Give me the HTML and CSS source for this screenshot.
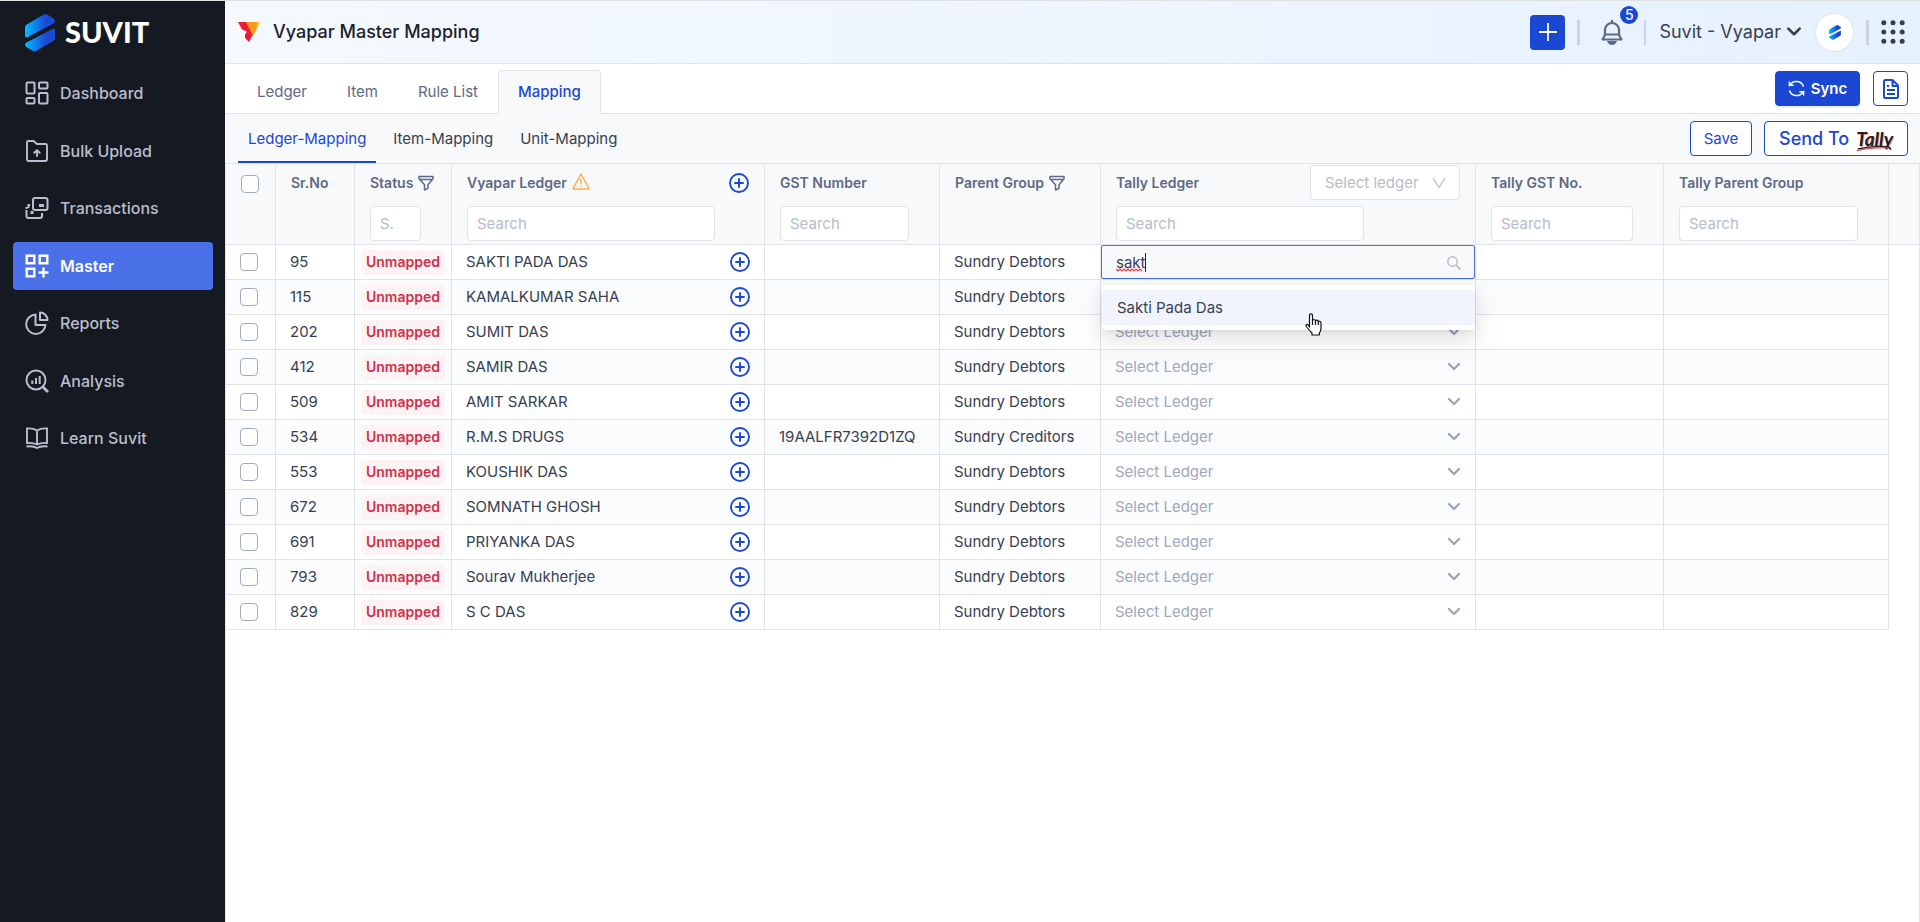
FILE: index.html
```html
<!DOCTYPE html>
<html lang="en">
<head>
<meta charset="utf-8">
<meta name="viewport" content="width=device-width, initial-scale=1">
<title>Vyapar Master Mapping</title>
<link rel="stylesheet" href="styles.css">
</head>
<body>
<svg class="sprite" aria-hidden="true">
  <defs>
    <linearGradient id="brand" x1="0" y1="0" x2="1" y2="0"><stop offset="0.05" stop-color="#06b4ff"/><stop offset="0.7" stop-color="#1b48d6"/></linearGradient>
    <symbol id="mark" viewBox="0 0 30 38">
      <path fill="url(#brand)" d="M0 13.5Q0 11.500 1.700 10.500L18.500 0.800Q20.500-0.300 22.500 0.800L28.500 4.400Q30 5.300 30 7Q30 8.500 28.500 9.400L2.500 23.300Q0 24.300 0 21.700Z"/>
      <path fill="url(#brand)" d="M30 24Q30 26 28.300 27L11.500 36.700Q9.500 37.800 7.500 36.700L1.500 33.100Q0 32.200 0 30.700Q0 29.300 1.500 28.400L27.500 14.900Q30 13.700 30 16.300Z"/>
    </symbol>
    <symbol id="plus-circle" viewBox="0 0 20 20"><g fill="none" stroke="currentColor" stroke-width="1.900"><circle cx="10" cy="10" r="9"/><path stroke-linecap="round" d="M10 6v8M6 10h8"/></g></symbol>
    <symbol id="funnel" viewBox="0 0 16 16"><path fill="none" stroke="currentColor" stroke-width="1.500" stroke-linejoin="round" d="M1 1.500h14v2.300L10 9.700v3.600L6.500 15V9.700L1 3.800ZM2 4.500h12"/></symbol>
    <symbol id="chevron" viewBox="0 0 14 10"><path fill="none" stroke="currentColor" stroke-width="2.300" stroke-linecap="round" stroke-linejoin="round" d="M2 2l5 5 5-5"/></symbol>
  </defs>
</svg>

<div class="app">
  <aside class="sidebar">
    <a class="brand" href="#"><svg class="brand-mark"><use href="#mark"/></svg><span>SUVIT</span></a>
    <nav class="nav" aria-label="Main">
      <a class="nav-item" href="#"><svg viewBox="0 0 24 24"><g fill="none" stroke="currentColor" stroke-width="2"><rect x="1.500" y="1.500" width="8" height="11" rx="1"/><rect x="14" y="1.500" width="8.500" height="6" rx="1"/><rect x="1.500" y="17" width="8" height="5.500" rx="1"/><rect x="14" y="12" width="8.500" height="10.500" rx="1"/></g></svg>Dashboard</a>
      <a class="nav-item" href="#"><svg viewBox="0 0 24 24"><g fill="none" stroke="currentColor" stroke-width="1.900" stroke-linejoin="round" stroke-linecap="round"><path d="M3 2h5.500l3.500 3h8.500q1.500 0 1.500 1.500V20q0 2-2 2H4q-2 0-2-2V3.500Q2 2 3 2Z"/><path d="M12 17v-5M9.300 13.800L12 11.200l2.700 2.600"/></g></svg>Bulk Upload</a>
      <a class="nav-item" href="#"><svg viewBox="0 0 24 24"><g fill="none" stroke="currentColor" stroke-width="2"><rect x="8" y="2" width="14.500" height="12" rx="2"/><path d="M5 9H3.500v3M1.500 14v6q0 2 2 2H15q2 0 2-2v-3M1.500 13V11"/></g><path fill="currentColor" d="M14 8h5v3h-5zM5.500 15h3v3h-3z"/></svg>Transactions</a>
      <a class="nav-item active" href="#" aria-current="page"><svg viewBox="0 0 24 24"><g fill="none" stroke="currentColor" stroke-width="2.400"><path d="M1.700 1.700h7.600v7.600H1.700zM14.700 1.700h7.600v7.600h-7.600zM1.700 14.700h7.600v7.600H1.700zM18.500 13.500v10M13.500 18.500h10"/></g></svg>Master</a>
      <a class="nav-item" href="#"><svg viewBox="0 0 24 24"><g fill="none" stroke="currentColor" stroke-width="2" stroke-linejoin="round"><path d="M10.500 3.500A9.700 9.700 0 1 0 20.500 14h-10Z"/><path d="M15 1.500v7.500h7.500A7.500 7.500 0 0 0 15 1.500Z"/></g></svg>Reports</a>
      <a class="nav-item" href="#"><svg viewBox="0 0 24 24"><g fill="none" stroke="currentColor"><circle cx="11" cy="11" r="9.500" stroke-width="2"/><path stroke-width="2.800" d="M17.500 17.500l5.500 5.500"/><path stroke-width="2" d="M7.300 15v-3.500M11 15V9M14.700 15V7"/></g></svg>Analysis</a>
      <a class="nav-item" href="#"><svg viewBox="0 0 24 24"><g fill="none" stroke="currentColor" stroke-width="1.900"><path d="M12 4.500Q8 2 2 2.500V17q6-.5 10 1.500 4-2 10-1.500V2.500Q16 2 12 4.500ZM12 4.500v14M1.500 20.500Q8 19.500 12 22q4-2.500 10.500-1.500"/></g></svg>Learn Suvit</a>
    </nav>
  </aside>

  <main class="main">
    <header class="topbar">
      <svg class="vyapar" viewBox="0 0 22 20"><path fill="#ffc61a" d="M18 0h4l-3.500 8z"/><path fill="#f89a1c" d="M7 0h12l-.500 8-4.500 7z"/><path fill="#ee1b3a" d="M0 0h8l6.500 13L11 20 7 16V12.500L9 9.500 4 7.500Z"/></svg>
      <h1>Vyapar Master Mapping</h1>
      <div class="tools">
        <button class="add" type="button" aria-label="Add"><svg viewBox="0 0 18 18"><path stroke="currentColor" stroke-width="1.800" d="M9 0v18M0 9h18"/></svg></button>
        <i class="rule"></i>
        <button class="bell" type="button" aria-label="Notifications"><svg viewBox="0 0 22 26"><g fill="none" stroke="#5d6985" stroke-width="2.200" stroke-linejoin="round"><path d="M4 16v-5a7 7 0 0 1 14 0v5l2.500 4.500h-19ZM4 15.500h14M11 4V1"/></g><path fill="#5d6985" d="M6 22h10q-1.500 4-5 4t-5-4Z"/></svg><span class="badge">5</span></button>
        <i class="rule thin"></i>
        <button class="company" type="button">Suvit - Vyapar<svg><use href="#chevron"/></svg></button>
        <a class="avatar" href="#" aria-label="Profile"><svg><use href="#mark"/></svg></a>
        <i class="rule"></i>
        <button class="apps" type="button" aria-label="Apps"><svg viewBox="0 0 24 24"><path fill="none" stroke="#38404f" stroke-width="5" stroke-linecap="round" d="M2.800 2.800h0M12 2.800h0M21.200 2.800h0M2.800 12h0M12 12h0M21.200 12h0M2.800 21.200h0M12 21.200h0M21.200 21.200h0"/></svg></button>
      </div>
    </header>

    <div class="tabs">
      <nav class="tab-list" aria-label="Sections"><a href="#">Ledger</a><a href="#">Item</a><a href="#">Rule List</a><a class="on" href="#">Mapping</a></nav>
      <div class="actions">
        <button class="btn primary" type="button"><svg viewBox="0 0 18 18"><g fill="none" stroke="currentColor" stroke-width="1.600"><path d="M1.500 6.500V1.500M1.500 5.500H6M2 5.500A8 8 0 0 1 16.500 7M16.500 11.500v5M16.500 12.500H12M16 12.500A8 8 0 0 1 1.500 11"/></g></svg>Sync</button>
        <button class="btn icon" type="button" aria-label="Document"><svg viewBox="0 0 16 20"><g fill="none" stroke="currentColor" stroke-width="2" stroke-linejoin="round"><path d="M2.500 1H9.500L15 6.500V17.500Q15 19 13.500 19H2.500Q1 19 1 17.500V2.500Q1 1 2.500 1ZM9.500 1v6h5.500M4 7h2M4 11h8M4 15h8"/></g></svg></button>
      </div>
    </div>

    <div class="subtabs">
      <nav class="subtab-list" aria-label="Mapping types"><a class="on" href="#">Ledger-Mapping</a><a href="#">Item-Mapping</a><a href="#">Unit-Mapping</a></nav>
      <div class="actions">
        <button class="btn save" type="button">Save</button>
        <button class="btn send" type="button">Send To <span class="tally">Tally<svg viewBox="0 0 42 8"><path fill="none" stroke="#d8343c" stroke-width="1.200" d="M1 7Q18 3 40 4"/><path fill="none" stroke="#231f20" stroke-width="1.500" d="M2 5Q18 1 37 2.500L40 6"/></svg></span></button>
      </div>
    </div>

    <div class="sheet">
      <table>
        <colgroup><col class="c-check"><col class="c-no"><col class="c-status"><col class="c-ledger"><col class="c-gst"><col class="c-group"><col class="c-tally"><col class="c-tgst"><col class="c-tgroup"><col></colgroup>
        <thead>
          <tr>
            <th><input type="checkbox" aria-label="Select all"></th>
            <th><div class="head">Sr.No</div></th>
            <th><div class="head">Status<svg class="funnel"><use href="#funnel"/></svg></div><input class="find w-status" type="text" placeholder="S." aria-label="Search status"></th>
            <th><div class="head">Vyapar Ledger<svg class="warn" viewBox="0 0 18 17"><path fill="none" stroke="#ffab4a" stroke-width="1.500" stroke-linejoin="round" stroke-linecap="round" d="M9 1L17 15.500Q17 16 16.500 16h-15Q1 16 1 15.500ZM9 6.500v4M9 13v.2"/></svg><button class="plus" type="button" aria-label="Create all"><svg><use href="#plus-circle"/></svg></button></div><input class="find w-ledger" type="text" placeholder="Search" aria-label="Search Vyapar ledger"></th>
            <th><div class="head">GST Number</div><input class="find w-gst" type="text" placeholder="Search" aria-label="Search GST number"></th>
            <th><div class="head">Parent Group<svg class="funnel"><use href="#funnel"/></svg></div></th>
            <th><div class="head">Tally Ledger<span class="pick-all"><select aria-label="Select ledger for all"><option>Select ledger</option></select><svg viewBox="0 0 12 12"><path fill="none" stroke="#b4b9c4" stroke-width="1.200" d="M0 1l6 9.500L12 1"/></svg></span></div><input class="find w-ledger" type="text" placeholder="Search" aria-label="Search Tally ledger"></th>
            <th><div class="head">Tally GST No.</div><input class="find w-tgst" type="text" placeholder="Search" aria-label="Search Tally GST number"></th>
            <th><div class="head">Tally Parent Group</div><input class="find w-tgroup" type="text" placeholder="Search" aria-label="Search Tally parent group"></th>
            <th></th>
          </tr>
        </thead>
        <tbody>
          <tr><td><input type="checkbox" aria-label="Row 95"></td><td>95</td><td><span class="pill">Unmapped</span></td><td><div class="name">SAKTI PADA DAS<button class="plus" type="button" aria-label="Create"><svg><use href="#plus-circle"/></svg></button></div></td><td></td><td>Sundry Debtors</td>
            <td class="editing">
              <div class="combo">
                <input type="text" value="sakt" aria-label="Tally ledger" spellcheck="false">
                <svg class="typing" viewBox="0 0 30 19"><path fill="none" stroke="#f03a3a" stroke-width="1.200" d="M0 16l2 2 2-2 2 2 2-2 2 2 2-2 2 2 2-2 2 2 2-2 2 2 2-2 2 2"/><path stroke="#20242c" d="M29.500 0v19"/></svg>
                <svg class="lens" viewBox="0 0 14 14"><g fill="none" stroke="#b8bac0" stroke-width="1.400"><circle cx="5.500" cy="5.500" r="4.700"/><path stroke-width="1.700" d="M9 9l4.500 4.500"/></g></svg>
                <div class="menu" role="listbox"><div class="option" role="option" aria-selected="true">Sakti Pada Das</div>
                  <svg class="hand" viewBox="0 0 17 23"><path fill="#fff" stroke="#111" stroke-width="1.200" stroke-linejoin="round" d="M4.500 14V2.500Q4.500.8 6 .8T7.500 2.500V8Q7.500 6.500 9 6.500T10.500 8.500Q10.500 7 12 7.200T13.300 9.200Q13.300 8 14.700 8.300T16 10v5q0 3-1.700 5v2H7v-2Q4 17 1.200 13.500.5 12 1.700 11.500T4.500 14ZM7.500 8v4M10.500 8.500V12M13.300 9v3"/></svg>
                </div>
              </div>
            </td><td></td><td></td><td></td></tr>
          <tr><td><input type="checkbox" aria-label="Row 115"></td><td>115</td><td><span class="pill">Unmapped</span></td><td><div class="name">KAMALKUMAR SAHA<button class="plus" type="button" aria-label="Create"><svg><use href="#plus-circle"/></svg></button></div></td><td></td><td>Sundry Debtors</td><td><div class="pick"><select aria-label="Tally ledger"><option>Select Ledger</option></select><svg><use href="#chevron"/></svg></div></td><td></td><td></td><td></td></tr>
          <tr><td><input type="checkbox" aria-label="Row 202"></td><td>202</td><td><span class="pill">Unmapped</span></td><td><div class="name">SUMIT DAS<button class="plus" type="button" aria-label="Create"><svg><use href="#plus-circle"/></svg></button></div></td><td></td><td>Sundry Debtors</td><td><div class="pick"><select aria-label="Tally ledger"><option>Select Ledger</option></select><svg><use href="#chevron"/></svg></div></td><td></td><td></td><td></td></tr>
          <tr><td><input type="checkbox" aria-label="Row 412"></td><td>412</td><td><span class="pill">Unmapped</span></td><td><div class="name">SAMIR DAS<button class="plus" type="button" aria-label="Create"><svg><use href="#plus-circle"/></svg></button></div></td><td></td><td>Sundry Debtors</td><td><div class="pick"><select aria-label="Tally ledger"><option>Select Ledger</option></select><svg><use href="#chevron"/></svg></div></td><td></td><td></td><td></td></tr>
          <tr><td><input type="checkbox" aria-label="Row 509"></td><td>509</td><td><span class="pill">Unmapped</span></td><td><div class="name">AMIT SARKAR<button class="plus" type="button" aria-label="Create"><svg><use href="#plus-circle"/></svg></button></div></td><td></td><td>Sundry Debtors</td><td><div class="pick"><select aria-label="Tally ledger"><option>Select Ledger</option></select><svg><use href="#chevron"/></svg></div></td><td></td><td></td><td></td></tr>
          <tr><td><input type="checkbox" aria-label="Row 534"></td><td>534</td><td><span class="pill">Unmapped</span></td><td><div class="name">R.M.S DRUGS<button class="plus" type="button" aria-label="Create"><svg><use href="#plus-circle"/></svg></button></div></td><td>19AALFR7392D1ZQ</td><td>Sundry Creditors</td><td><div class="pick"><select aria-label="Tally ledger"><option>Select Ledger</option></select><svg><use href="#chevron"/></svg></div></td><td></td><td></td><td></td></tr>
          <tr><td><input type="checkbox" aria-label="Row 553"></td><td>553</td><td><span class="pill">Unmapped</span></td><td><div class="name">KOUSHIK DAS<button class="plus" type="button" aria-label="Create"><svg><use href="#plus-circle"/></svg></button></div></td><td></td><td>Sundry Debtors</td><td><div class="pick"><select aria-label="Tally ledger"><option>Select Ledger</option></select><svg><use href="#chevron"/></svg></div></td><td></td><td></td><td></td></tr>
          <tr><td><input type="checkbox" aria-label="Row 672"></td><td>672</td><td><span class="pill">Unmapped</span></td><td><div class="name">SOMNATH GHOSH<button class="plus" type="button" aria-label="Create"><svg><use href="#plus-circle"/></svg></button></div></td><td></td><td>Sundry Debtors</td><td><div class="pick"><select aria-label="Tally ledger"><option>Select Ledger</option></select><svg><use href="#chevron"/></svg></div></td><td></td><td></td><td></td></tr>
          <tr><td><input type="checkbox" aria-label="Row 691"></td><td>691</td><td><span class="pill">Unmapped</span></td><td><div class="name">PRIYANKA DAS<button class="plus" type="button" aria-label="Create"><svg><use href="#plus-circle"/></svg></button></div></td><td></td><td>Sundry Debtors</td><td><div class="pick"><select aria-label="Tally ledger"><option>Select Ledger</option></select><svg><use href="#chevron"/></svg></div></td><td></td><td></td><td></td></tr>
          <tr><td><input type="checkbox" aria-label="Row 793"></td><td>793</td><td><span class="pill">Unmapped</span></td><td><div class="name">Sourav Mukherjee<button class="plus" type="button" aria-label="Create"><svg><use href="#plus-circle"/></svg></button></div></td><td></td><td>Sundry Debtors</td><td><div class="pick"><select aria-label="Tally ledger"><option>Select Ledger</option></select><svg><use href="#chevron"/></svg></div></td><td></td><td></td><td></td></tr>
          <tr><td><input type="checkbox" aria-label="Row 829"></td><td>829</td><td><span class="pill">Unmapped</span></td><td><div class="name">S C DAS<button class="plus" type="button" aria-label="Create"><svg><use href="#plus-circle"/></svg></button></div></td><td></td><td>Sundry Debtors</td><td><div class="pick"><select aria-label="Tally ledger"><option>Select Ledger</option></select><svg><use href="#chevron"/></svg></div></td><td></td><td></td><td></td></tr>
        </tbody>
      </table>
    </div>
  </main>
</div>
</body>
</html>
```

FILE: styles.css
```css
* { box-sizing: border-box; }
:root { --blue: #1b48d3; --line: #e2e3e8; --slate: #5d6985; --ink: #38404f; --soft: #f8f9fb; }
body { margin: 0; font: 15px/20px Inter, "Liberation Sans", sans-serif; color: var(--ink); background: #fff; }
button, input, select { font: inherit; color: inherit; margin: 0; }
button { padding: 0; border: 0; background: none; }
a { color: inherit; text-decoration: none; }
svg { display: block; flex: none; }
.sprite { position: absolute; width: 0; height: 0; }

.app { display: flex; min-height: 100vh; border-top: 1px solid #dfe2e3; }

.sidebar { flex: none; width: 225px; padding: 13px 12px 0 13px; background: #151922; }
.brand { display: flex; align-items: center; gap: 10px; height: 38px; padding-left: 12px; color: #fff; font: 900 29px/36px Lato, sans-serif; }
.brand span { padding-bottom: 2px; }
.brand-mark { width: 30px; height: 38px; }
.nav { display: flex; flex-direction: column; justify-content: space-between; height: 393px; margin-top: 17px; }
.nav-item { display: flex; align-items: center; gap: 11px; height: 48px; padding-left: 12px; border-radius: 4px; color: #b9bfce; font-size: 16px; font-weight: 500; }
.nav-item svg { width: 24px; height: 24px; }
.nav-item.active { background: #4a70e8; color: #fff; font-weight: 600; }

.main { flex: 1; min-width: 0; display: flex; flex-direction: column; }

.topbar { display: flex; align-items: center; height: 63px; padding: 0 15px 0 13px; border-bottom: 1px solid var(--line); background: linear-gradient(90deg, #f5f9ff, #eff6ff 40%, #e6f1fe); }
.vyapar { width: 22px; height: 20px; }
.topbar h1 { margin: 0 0 0 13px; font-size: 18px; line-height: 24px; font-weight: 500; color: #1c212b; }
.tools { display: flex; align-items: center; margin-left: auto; }
.add { display: grid; place-items: center; width: 35px; height: 35px; border-radius: 4px; background: var(--blue); color: #fff; }
.add svg { width: 18px; height: 18px; }
.rule { width: 3px; height: 25px; margin: 0 12px; background: #cdd2de; }
.rule.thin { width: 2px; margin: 0 13px 0 21px; }
.bell { position: relative; margin-left: 9px; }
.bell svg { width: 22px; height: 26px; }
.badge { position: absolute; left: 19px; top: -13px; width: 18px; height: 18px; border-radius: 9px; background: var(--blue); color: #fff; font-size: 14px; line-height: 18px; font-weight: 500; }
.company { display: flex; align-items: center; gap: 5px; font-size: 18px; line-height: 24px; }
.company svg { width: 16px; height: 12px; }
.avatar { display: grid; place-items: center; width: 39px; height: 39px; margin-left: 13px; border: 1px solid #dfe5ee; border-radius: 50%; background: #fff; }
.avatar svg { width: 12px; height: 15px; }
.apps svg { width: 24px; height: 24px; }

.tabs { display: flex; height: 50px; padding: 6px 12px 0 12px; border-bottom: 1px solid var(--line); }
.tab-list { display: flex; margin-bottom: -1px; color: var(--slate); }
.tab-list a { padding: 11px 19px 0; border: 1px solid transparent; border-bottom: 0; border-radius: 4px 4px 0 0; line-height: 20px; }
.tab-list .on { background: var(--soft); border-color: var(--line); color: var(--blue); font-weight: 500; }
.actions { display: flex; gap: 12px; margin-left: auto; }
.btn { display: flex; align-items: center; justify-content: center; height: 35px; border: 1px solid var(--blue); border-radius: 4px; background: #fff; color: var(--blue); }
.tabs .actions { gap: 13px; padding-top: 1px; }
.primary { width: 85px; gap: 6px; background: var(--blue); color: #fff; font-weight: 600; box-shadow: 0 2px 2px #e3edfb; }
.primary svg { width: 17px; height: 17px; }
.icon { width: 35px; }
.icon svg { width: 16px; height: 20px; }

.subtabs { display: flex; height: 50px; padding: 0 12px 0 13px; border-bottom: 1px solid var(--line); background: var(--soft); }
.subtabs .actions { padding-top: 7px; }
.subtab-list { display: flex; gap: 7px; }
.subtab-list a { padding: 15px 10px 0; }
.subtab-list .on { color: var(--blue); border-bottom: 2px solid var(--blue); }
.save { width: 62px; }
.send { width: 144px; gap: 7px; font-size: 18px; font-weight: 500; }
.tally { position: relative; color: #231f20; font: italic 700 19px/24px Lato, sans-serif; text-shadow: 1px 1px #f2a3a6; }
.tally svg { position: absolute; left: 0; bottom: -1px; width: 100%; height: 8px; }

.sheet { flex: 1; border: solid var(--line); border-width: 0 1px; }
table { width: 100%; table-layout: fixed; border-spacing: 0; }
.c-check { width: 50px; } .c-no { width: 79px; } .c-status { width: 97px; } .c-ledger { width: 313px; } .c-gst { width: 175px; }
.c-group { width: 161px; } .c-tally { width: 375px; } .c-tgst { width: 188px; } .c-tgroup { width: 225px; }
th, td { border: solid var(--line); border-width: 0 1px 1px 0; text-align: left; white-space: nowrap; }
th { height: 81px; padding: 1px 15px 3px 15px; vertical-align: top; background: var(--soft); color: var(--slate); font-size: 14px; font-weight: 600; }
th:last-child { border-right: 0; padding: 0; }
td { height: 35px; padding: 0 14px; }
td:last-child { border: 0; padding: 0; background: #fff; }
tbody tr:nth-child(even) { background: #fbfcfe; }
.head { display: flex; align-items: center; height: 35px; margin-bottom: 6px; }
.funnel { width: 16px; height: 16px; margin-left: 5px; }
.warn { width: 18px; height: 17px; margin: 0 0 3px 5px; }
.plus { margin-left: auto; color: var(--blue); }
.plus svg { width: 20px; height: 20px; }
.find { display: block; height: 35px; padding: 0 9px; border: 1px solid var(--line); border-radius: 4px; background: #fff; font-size: 15px; font-weight: 400; outline: 0; }
.find::placeholder { color: #b6bccb; opacity: 1; }
.w-status { width: 51px; } .w-ledger { width: 248px; } .w-gst { width: 129px; } .w-tgst { width: 142px; } .w-tgroup { width: 179px; }
.pick-all { position: relative; width: 150px; height: 35px; margin-left: auto; }
.pick-all select { appearance: none; width: 100%; height: 100%; padding: 0 14px; border: 1px solid var(--line); border-radius: 4px; background: #fff; color: #b6bccb; font-size: 15px; font-weight: 400; }
.pick-all svg { position: absolute; right: 15px; top: 12px; width: 12px; height: 12px; }

input[type="checkbox"] { appearance: none; display: block; width: 18px; height: 18px; border: 1px solid #a3abbe; border-radius: 4px; background: #fff; }
th input[type="checkbox"] { margin-top: 10px; }
.pill { display: block; width: 84px; margin-left: -8px; padding-bottom: 1px; border-radius: 4px; background: #fdf3f4; color: #d32f48; font-size: 14px; line-height: 24px; font-weight: 600; text-align: center; }
.name { display: flex; align-items: center; }
.pick { display: flex; align-items: center; }
.pick select { appearance: none; flex: 1; padding: 0; border: 0; background: none; color: #a0a8ba; }
.pick svg { width: 14px; height: 10px; color: #9ba4b8; }
td.editing { padding: 0; }
.combo { position: relative; height: 34px; }
.combo input { display: block; width: 100%; height: 34px; padding: 0 15px 0 14px; border: 1px solid #4a70e8; border-radius: 2px; background: var(--soft); outline: 0; }
.typing { position: absolute; left: 15px; top: 8px; width: 30px; height: 19px; }
.lens { position: absolute; right: 14px; top: 11px; width: 14px; height: 14px; }
.menu { position: absolute; z-index: 2; left: 1px; right: 0; top: 40px; padding: 5px 0; border-radius: 4px; background: #fff; box-shadow: 0 6px 16px rgba(0,0,0,.08), 0 3px 6px -4px rgba(0,0,0,.12), 0 9px 28px 8px rgba(0,0,0,.05); }
.option { padding: 0 15px; border-radius: 4px; background: #f1f4fd; line-height: 35px; }
.hand { position: absolute; left: 203px; top: 28px; width: 17px; height: 23px; }
```
